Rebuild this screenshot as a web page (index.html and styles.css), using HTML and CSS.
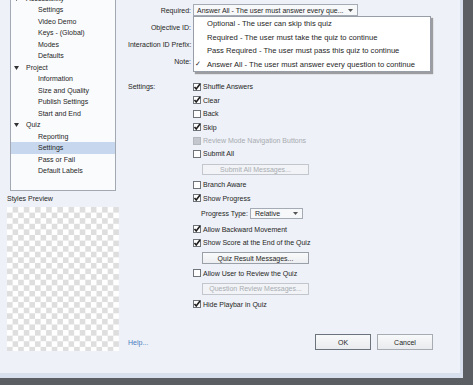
FILE: index.html
```html
<!DOCTYPE html>
<html lang="en">
<head>
    <meta charset="utf-8" />
    <title>Quiz Preferences</title>
    <link rel="stylesheet" href="styles.css">
</head>
<body>

    <div class="dialog">

        <div class="side">
            <ul class="tree">
                <li class="parent"><svg class="arrow" width="5" height="4" viewBox="0 0 5 4"><polygon points="0,0 5,0 2.5,4" /></svg>Accessibility</li>
                <li>Settings</li>
                <li>Video Demo</li>
                <li>Keys - (Global)</li>
                <li>Modes</li>
                <li>Defaults</li>
                <li class="parent"><svg class="arrow" width="5" height="4" viewBox="0 0 5 4"><polygon points="0,0 5,0 2.5,4" /></svg>Project</li>
                <li>Information</li>
                <li>Size and Quality</li>
                <li>Publish Settings</li>
                <li>Start and End</li>
                <li class="parent"><svg class="arrow" width="5" height="4" viewBox="0 0 5 4"><polygon points="0,0 5,0 2.5,4" /></svg>Quiz</li>
                <li>Reporting</li>
                <li class="selected">Settings</li>
                <li>Pass or Fail</li>
                <li>Default Labels</li>
            </ul>
            <div class="preview-label">Styles Preview</div>
            <div class="preview"></div>
        </div>

        <div class="main">
            <div class="field">
                <label>Required:</label>
                <div class="select wide">
                    <span>Answer All - The user must answer every que...</span>
                    <svg class="drop" width="5" height="3" viewBox="0 0 5 3"><polygon points="0,0 5,0 2.5,3" /></svg>
                    <ul class="menu">
                        <li><span class="tick"></span>Optional - The user can skip this quiz</li>
                        <li><span class="tick"></span>Required - The user must take the quiz to continue</li>
                        <li><span class="tick"></span>Pass Required - The user must pass this quiz to continue</li>
                        <li><span class="tick">&#10003;</span>Answer All - The user must answer every question to continue</li>
                    </ul>
                </div>
            </div>
            <div class="field"><label>Objective ID:</label></div>
            <div class="field"><label>Interaction ID Prefix:</label></div>
            <div class="field"><label>Note:</label></div>

            <div class="field settings">
                <label>Settings:</label>
                <div class="checks">
                    <div class="check"><span class="box on"><svg width="8" height="8" viewBox="0 0 8 8"><polyline points="1.5,4 3.2,6 7,1" /></svg></span>Shuffle Answers</div>
                    <div class="check"><span class="box on"><svg width="8" height="8" viewBox="0 0 8 8"><polyline points="1.5,4 3.2,6 7,1" /></svg></span>Clear</div>
                    <div class="check"><span class="box"></span>Back</div>
                    <div class="check"><span class="box on"><svg width="8" height="8" viewBox="0 0 8 8"><polyline points="1.5,4 3.2,6 7,1" /></svg></span>Skip</div>
                    <div class="check disabled"><span class="box"></span>Review Mode Navigation Buttons</div>
                    <div class="check"><span class="box"></span>Submit All</div>
                    <button class="sub" disabled>Submit All Messages...</button>
                    <div class="check"><span class="box"></span>Branch Aware</div>
                    <div class="check"><span class="box on"><svg width="8" height="8" viewBox="0 0 8 8"><polyline points="1.5,4 3.2,6 7,1" /></svg></span>Show Progress</div>
                    <div class="progress">
                        Progress Type:
                        <div class="select small">
                            <span>Relative</span>
                            <svg class="drop" width="5" height="3" viewBox="0 0 5 3"><polygon points="0,0 5,0 2.5,3" /></svg>
                        </div>
                    </div>
                    <div class="check"><span class="box on"><svg width="8" height="8" viewBox="0 0 8 8"><polyline points="1.5,4 3.2,6 7,1" /></svg></span>Allow Backward Movement</div>
                    <div class="check"><span class="box on"><svg width="8" height="8" viewBox="0 0 8 8"><polyline points="1.5,4 3.2,6 7,1" /></svg></span>Show Score at the End of the Quiz</div>
                    <button class="sub">Quiz Result Messages...</button>
                    <div class="check"><span class="box"></span>Allow User to Review the Quiz</div>
                    <button class="sub" disabled>Question Review Messages...</button>
                    <div class="check"><span class="box on"><svg width="8" height="8" viewBox="0 0 8 8"><polyline points="1.5,4 3.2,6 7,1" /></svg></span>Hide Playbar in Quiz</div>
                </div>
            </div>

            <div class="footer">
                <a href="#">Help...</a>
                <div class="buttons">
                    <button class="btn default">OK</button>
                    <button class="btn">Cancel</button>
                </div>
            </div>
        </div>

    </div>

</body>
</html>
```

FILE: styles.css
```css
body {
    background: #5b5e63;
    color: #262626;
    font: 7px 'Liberation Sans', Arial, sans-serif;
    margin: 0;
    padding: 0;
    overflow: hidden;
}

.dialog {
    display: flex;
    width: 460px;
    height: 373px;
    background: #eef1f7;
    border-right: 3px solid #d7e0ec;
    border-bottom: 5px solid #d7e0ec;
    overflow: hidden;
}

/* left column */

.side {
    width: 113px;
    padding-left: 7px;
}

.tree {
    list-style: none;
    box-sizing: border-box;
    width: 106px;
    height: 200px;
    margin: -9px 0 0 3px;
    padding: 0.75px 0 0;
    background: #fafbfd;
    border: 1px solid #a3a9b2;
}

    .tree li {
        height: 11.5px;
        line-height: 11.5px;
        padding-left: 27px;
        white-space: nowrap;
    }

    .tree li.parent {
        padding-left: 3px;
    }

    .tree li.selected {
        background: #c7d8ee;
    }

.arrow {
    margin: 0 7px 0 0;
    vertical-align: 0;
    fill: #333;
}

.preview-label {
    line-height: 10px;
    margin-top: 3px;
}

.preview {
    width: 112px;
    height: 144px;
    margin-top: 3px;
    background-color: #fff;
    background-image: conic-gradient(#dedede 25%, transparent 0 50%, #dedede 0 75%, transparent 0);
    background-size: 11.2px 11.2px;
}

/* right column */

.main {
    flex: 1;
    display: flex;
    flex-direction: column;
    padding: 1.5px 0 0 8px;
}

.field {
    display: grid;
    grid-template-columns: 63px 1fr;
    column-gap: 2px;
    align-items: center;
    height: 17px;
}

    .field label {
        text-align: right;
        white-space: nowrap;
    }

.field.settings {
    height: auto;
    align-items: start;
    margin-top: 10.8px;
}

    .field.settings label {
        text-align: left;
        line-height: 13.4px;
    }

.select {
    position: relative;
    display: flex;
    align-items: center;
    justify-content: space-between;
    box-sizing: border-box;
    height: 11.5px;
    padding: 0 3px 0 3px;
    background: #f7f8fa;
    border: 1px solid #a4abb5;
    white-space: nowrap;
}

    .select.wide {
        width: 165px;
    }

    .select.small {
        width: 53px;
        margin-left: 2px;
        padding-left: 4px;
    }

.drop {
    fill: #555;
    margin-right: 1px;
}

.menu {
    position: absolute;
    left: -1px;
    top: 11px;
    z-index: 2;
    width: 236px;
    margin: 0;
    padding: 0;
    list-style: none;
    background: #fff;
    border: 1px solid #979ea8;
    box-shadow: 2px 2px 1px rgba(0, 0, 0, 0.35);
    font-size: 7.6px;
    color: #262626;
}

    .menu li {
        display: flex;
        align-items: center;
        height: 13.4px;
    }

.tick {
    width: 12px;
    padding-left: 1px;
    font-size: 7px;
}

.checks {
    display: flex;
    flex-direction: column;
    align-items: flex-start;
}

.check {
    display: flex;
    align-items: center;
    height: 13.4px;
    white-space: nowrap;
}

    .check.disabled {
        color: #a7abb1;
    }

.box {
    box-sizing: border-box;
    width: 8px;
    height: 8px;
    margin-right: 2px;
    background: #fff;
    border: 1px solid #6f747b;
}

    .box svg {
        display: block;
        margin: -1px 0 0 -1px;
        fill: none;
        stroke: #1e1e1e;
        stroke-width: 1.6;
    }

.check.disabled .box {
    background: #c4c8ce;
    border-color: #b3b8bf;
}

.sub {
    box-sizing: border-box;
    width: 107px;
    height: 11.5px;
    margin: 3px 0 3px 9px;
    padding: 0;
    font: 7px 'Liberation Sans', Arial, sans-serif;
    color: #262626;
    background: linear-gradient(#f9fafb, #eceef1);
    border: 1px solid #9aa0a8;
}

    .sub:disabled {
        color: #a9adb3;
        border-color: #c3c7cd;
        background: #f1f3f6;
    }

.progress {
    display: flex;
    align-items: center;
    height: 17.6px;
    padding-left: 8px;
    white-space: nowrap;
}

.footer {
    margin-top: auto;
    display: flex;
    align-items: center;
    justify-content: space-between;
    padding: 0 27px 23px 0;
}

a {
    color: #4a7ec2;
    text-decoration: none;
}

.buttons {
    display: flex;
    gap: 6px;
}

.btn {
    box-sizing: border-box;
    width: 56px;
    height: 16px;
    padding: 0;
    font: 7px 'Liberation Sans', Arial, sans-serif;
    color: #262626;
    background: linear-gradient(#f8f9fa, #e9ebee);
    border: 1px solid #a7acb3;
}

    .btn.default {
        border-color: #6b737d;
    }
```
